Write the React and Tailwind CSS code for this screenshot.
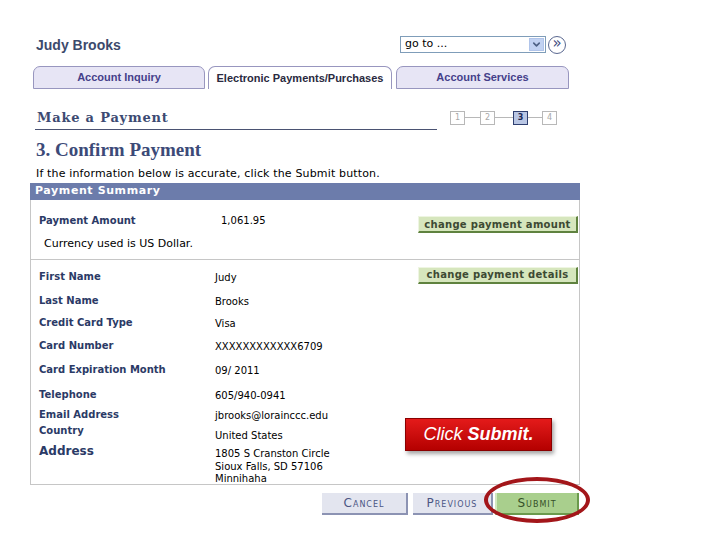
import { ChevronDown } from 'lucide-react'

const verdana = { fontFamily: '"DejaVu Sans", Verdana, sans-serif' }

const rows = [
  { label: 'Last Name', value: 'Brooks', h: 'h-[22px]' },
  { label: 'Credit Card Type', value: 'Visa', h: 'h-[23px]' },
  { label: 'Card Number', value: 'XXXXXXXXXXXX6709', h: 'h-[24px]' },
  { label: 'Card Expiration Month', value: '09/ 2011', h: 'h-[25px]' },
  { label: 'Telephone', value: '605/940-0941', h: 'h-[20px]' },
  { label: 'Email Address', value: 'jbrooks@lorainccc.edu', h: 'h-[16px]' },
]

function ChangeButton({ children }) {
  return (
    <div className="w-[160px] h-[17px] bg-[#d6e6bd] border-r-2 border-b-2 border-[#5f823f] border-t border-l border-t-[#eef5e2] border-l-[#eef5e2] flex items-center justify-center text-[10px] font-bold text-[#3d4a33] tracking-[0.3px]">
      {children}
    </div>
  )
}

function Step({ n, active }) {
  return (
    <div
      className={`w-[15px] h-[14px] border flex items-center justify-center text-[8px] leading-none ${
        active ? 'bg-[#b9c6e4] border-[#2f3f70] text-[#1d2a55] font-bold' : 'bg-white border-[#b8b8b8] text-[#a8a8a8]'
      }`}
    >
      {n}
    </div>
  )
}

export default function App() {
  return (
    <div className="w-[728px] h-[546px] bg-white relative overflow-hidden" style={verdana}>
      <div className="ml-[30px] w-[550px] pt-[36px]">
        {/* name + go to */}
        <div className="h-[17px] flex items-center justify-between">
          <div className="pl-[6px] pt-[1px] text-[14px] font-bold text-[#3c4a6c]" style={{ fontFamily: '"Liberation Sans", Arial, sans-serif' }}>
            Judy Brooks
          </div>
          <div className="flex items-center mr-[14px]">
            <div className="w-[146px] h-[17px] border border-[#7f9db9] flex items-center justify-between pl-[4px] pr-[1px] text-[11px] text-black">
              <span>go to ...</span>
              <div className="w-[15px] h-[13px] bg-[#c1d2f2] border border-[#b0c4ea] flex items-center justify-center">
                <ChevronDown size={11} strokeWidth={3.5} className="text-[#4d6185]" />
              </div>
            </div>
            <div className="ml-[2px] w-[18px] h-[18px] rounded-full border border-[#5a6890] flex items-center justify-center text-[15px] leading-none text-[#3c4a7c] pb-[2px]">
              »
            </div>
          </div>
        </div>

        {/* tabs */}
        <div
          className="mt-[13px] ml-[3px] flex items-end h-[23px] text-[11px] font-bold"
          style={{ fontFamily: '"Liberation Sans", Arial, sans-serif' }}
        >
          <div className="w-[172px] h-[23px] bg-[#e7e5f5] border border-[#9896bf] rounded-t-[7px] flex items-center justify-center text-[#45408a]">
            Account Inquiry
          </div>
          <div className="ml-[3px] w-[184px] h-[23px] bg-white border border-b-0 border-[#9896bf] rounded-t-[7px] flex items-center justify-center text-[#2a2a40]">
            Electronic Payments/Purchases
          </div>
          <div className="ml-[4px] w-[173px] h-[23px] bg-[#e7e5f5] border border-[#9896bf] rounded-t-[7px] flex items-center justify-center text-[#45408a]">
            Account Services
          </div>
        </div>

        {/* make a payment */}
        <div className="mt-[16px] h-[25px] flex items-center">
          <div
            className="ml-[5px] w-[402px] h-full border-b border-[#4a5272] flex items-end pb-[3px] pl-[2px] text-[13px] leading-[16px] font-bold tracking-[0.8px] text-[#3c4a72]"
            style={{ fontFamily: '"DejaVu Serif", Georgia, serif' }}
          >
            Make a Payment
          </div>
          <div className="ml-[13px] flex items-center">
            <Step n="1" />
            <div className="w-[15px] h-px bg-[#b8b8b8]" />
            <Step n="2" />
            <div className="w-[18px] h-px bg-[#b8b8b8]" />
            <Step n="3" active />
            <div className="w-[14px] h-px bg-[#b8b8b8]" />
            <Step n="4" />
          </div>
        </div>

        <div
          className="mt-[9px] pl-[6px] text-[19px] leading-[22px] font-bold text-[#3c4a78]"
          style={{ fontFamily: '"Liberation Serif", Georgia, serif' }}
        >
          3. Confirm Payment
        </div>
        <div className="mt-[6px] pl-[6px] text-[11px] leading-[14px] tracking-[0.15px] text-black">
          If the information below is accurate, click the Submit button.
        </div>

        {/* panel */}
        <div className="mt-[2px]">
          <div className="h-[17px] bg-[#6c7cab] flex items-center pl-[5px] text-[11px] font-bold text-white tracking-[0.6px]">
            Payment Summary
          </div>
          <div className="h-[285px] border-x border-b border-[#c6c6c6]">
            <div className="h-[60px] border-b border-[#c6c6c6] pt-[15px]">
              <div className="flex items-start justify-between pr-[1px]">
                <div className="flex text-[10px] leading-[12px]">
                  <div className="pl-[8px] w-[190px] font-bold text-[#2b3a66]">Payment Amount</div>
                  <div className="text-black">1,061.95</div>
                </div>
                <div className="mt-px">
                  <ChangeButton>change payment amount</ChangeButton>
                </div>
              </div>
              <div className="mt-[4px] pl-[13px] text-[11px] leading-[14px] text-black">Currency used is US Dollar.</div>
            </div>

            <div className="pt-[11px] text-[10px] leading-[12px]">
              <div className="h-[24px] flex items-start justify-between pr-[1px]">
                <div className="flex">
                  <div className="pl-[8px] w-[184px] font-bold text-[#2b3a66]">First Name</div>
                  <div className="mt-px text-black">Judy</div>
                </div>
                <div className="-mt-[4px]">
                  <ChangeButton>change payment details</ChangeButton>
                </div>
              </div>
              {rows.map((r) => (
                <div key={r.label} className={`${r.h} flex items-start`}>
                  <div className="pl-[8px] w-[184px] font-bold text-[#2b3a66]">{r.label}</div>
                  <div className="mt-px text-black">{r.value}</div>
                </div>
              ))}
              <div className="h-[19px] flex items-start">
                <div className="pl-[8px] w-[184px] font-bold text-[#2b3a66]">Country</div>
                <div className="mt-[5px] text-black">United States</div>
              </div>
              <div className="flex items-start">
                <div className="pl-[8px] w-[184px] text-[12px] leading-[14px] font-bold text-[#2b3a66]">Address</div>
                <div className="mt-[4px] leading-[12.5px] text-black">
                  <div>1805 S Cranston Circle</div>
                  <div>Sioux Falls, SD 57106</div>
                  <div>Minnihaha</div>
                </div>
              </div>
            </div>
          </div>
        </div>

        {/* buttons */}
        <div className="mt-[8px] flex justify-end pr-[1px] text-[12px] tracking-[1px] [font-variant:small-caps]">
          <div className="w-[86px] h-[22px] bg-[#e3e5ef] border-r-2 border-b-2 border-[#8c93b3] flex items-center justify-center text-[#4b5684]">
            Cancel
          </div>
          <div className="ml-[5px] w-[80px] h-[22px] bg-[#e3e5ef] border-r-2 border-b-2 border-[#8c93b3] flex items-center justify-center text-[#4b5684]">
            Previous
          </div>
          <div className="ml-[2px] w-[84px] h-[22px] bg-[#a9cf8d] border-l-2 border-l-[#d2e8bf] border-r-2 border-b-2 border-[#6b9a4c] flex items-center justify-center text-[#355028]">
            Submit
          </div>
        </div>
      </div>

      {/* callout overlays */}
      <div
        className="absolute left-[405px] top-[418px] w-[147px] h-[33px] bg-gradient-to-b from-[#e41a1a] to-[#b40000] border border-[#8a0000] shadow-[2px_3px_4px_rgba(0,0,0,0.35)] flex items-center justify-center text-[18px] italic text-white"
        style={{ fontFamily: '"Liberation Sans", Arial, sans-serif' }}
      >
        Click&nbsp;<span className="font-bold">Submit.</span>
      </div>
      <div className="absolute left-[484px] top-[477px] w-[106px] h-[46px] rounded-[50%] border-[4px] border-[#a3161a]" />
    </div>
  )
}
